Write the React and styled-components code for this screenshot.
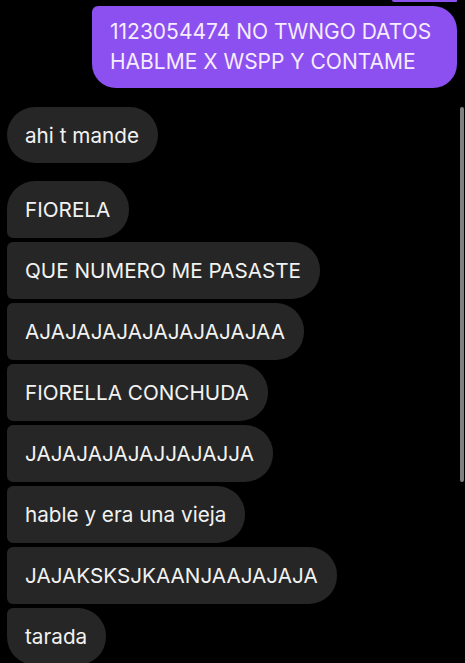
import React from "react";
import styled, { createGlobalStyle } from "styled-components";

const GlobalStyle = createGlobalStyle`
  html, body {
    margin: 0;
    padding: 0;
    background: #000;
  }
  body {
    font-family: Inter, "Liberation Sans", Arial, sans-serif;
  }
`;

const Screen = styled.div`
  position: relative;
  width: 465px;
  height: 663px;
  overflow: hidden;
  background: #000;
`;

const Thread = styled.div`
  display: flex;
  flex-direction: column;
  padding: 0 8px 0 7px;
`;

const PrevTail = styled.div`
  align-self: flex-end;
  width: 65px;
  height: 2px;
  background: #8c4ff0;
  border-radius: 0 0 4px 10px;
`;

const Sent = styled.div`
  align-self: flex-end;
  margin-top: 4px;
  width: 365px;
  box-sizing: border-box;
  padding: 11px 18px 0 18px;
  height: 82px;
  background: #8c4ff0;
  color: #f6ecff;
  font-size: 21px;
  line-height: 30px;
  border-radius: 6px 24px 24px 24px;
`;

const Group = styled.div`
  display: flex;
  flex-direction: column;
  align-items: flex-start;
  gap: 4px;
  margin-top: ${(p) => p.top}px;
`;

const corner = (pos) => {
  if (pos === "single") return "28px";
  if (pos === "first") return "28px 28px 28px 6px";
  if (pos === "last") return "6px 28px 28px 28px";
  return "6px 28px 28px 6px";
};

const Bubble = styled.div`
  display: flex;
  align-items: center;
  height: ${(p) => (p.pos === "single" ? 56 : 57)}px;
  padding: 0 19px 0 18px;
  background: #262626;
  color: #f2f2f2;
  font-size: 20.7px;
  white-space: nowrap;
  border-radius: ${(p) => corner(p.pos)};
`;

const Scrollbar = styled.div`
  position: absolute;
  right: 1px;
  top: 107px;
  width: 4px;
  height: 375px;
  border-radius: 2px;
  background: #808080;
`;

const received = [
  "FIORELA",
  "QUE NUMERO ME PASASTE",
  "AJAJAJAJAJAJAJAJAJAA",
  "FIORELLA CONCHUDA",
  "JAJAJAJAJAJJAJAJJA",
  "hable y era una vieja",
  "JAJAKSKSJKAANJAAJAJAJA",
  "tarada",
];

const App = () => {
  return (
    <Screen>
      <GlobalStyle />
      <Thread>
        <PrevTail />
        <Sent>
          1123054474 NO TWNGO DATOS
          <br />
          HABLME X WSPP Y CONTAME
        </Sent>
        <Group top={19}>
          <Bubble pos="single">ahi t mande</Bubble>
        </Group>
        <Group top={18}>
          {received.map((text, i) => (
            <Bubble
              key={i}
              pos={i === 0 ? "first" : i === received.length - 1 ? "last" : "middle"}
            >
              {text}
            </Bubble>
          ))}
        </Group>
      </Thread>
      <Scrollbar />
    </Screen>
  );
};

export default App;
